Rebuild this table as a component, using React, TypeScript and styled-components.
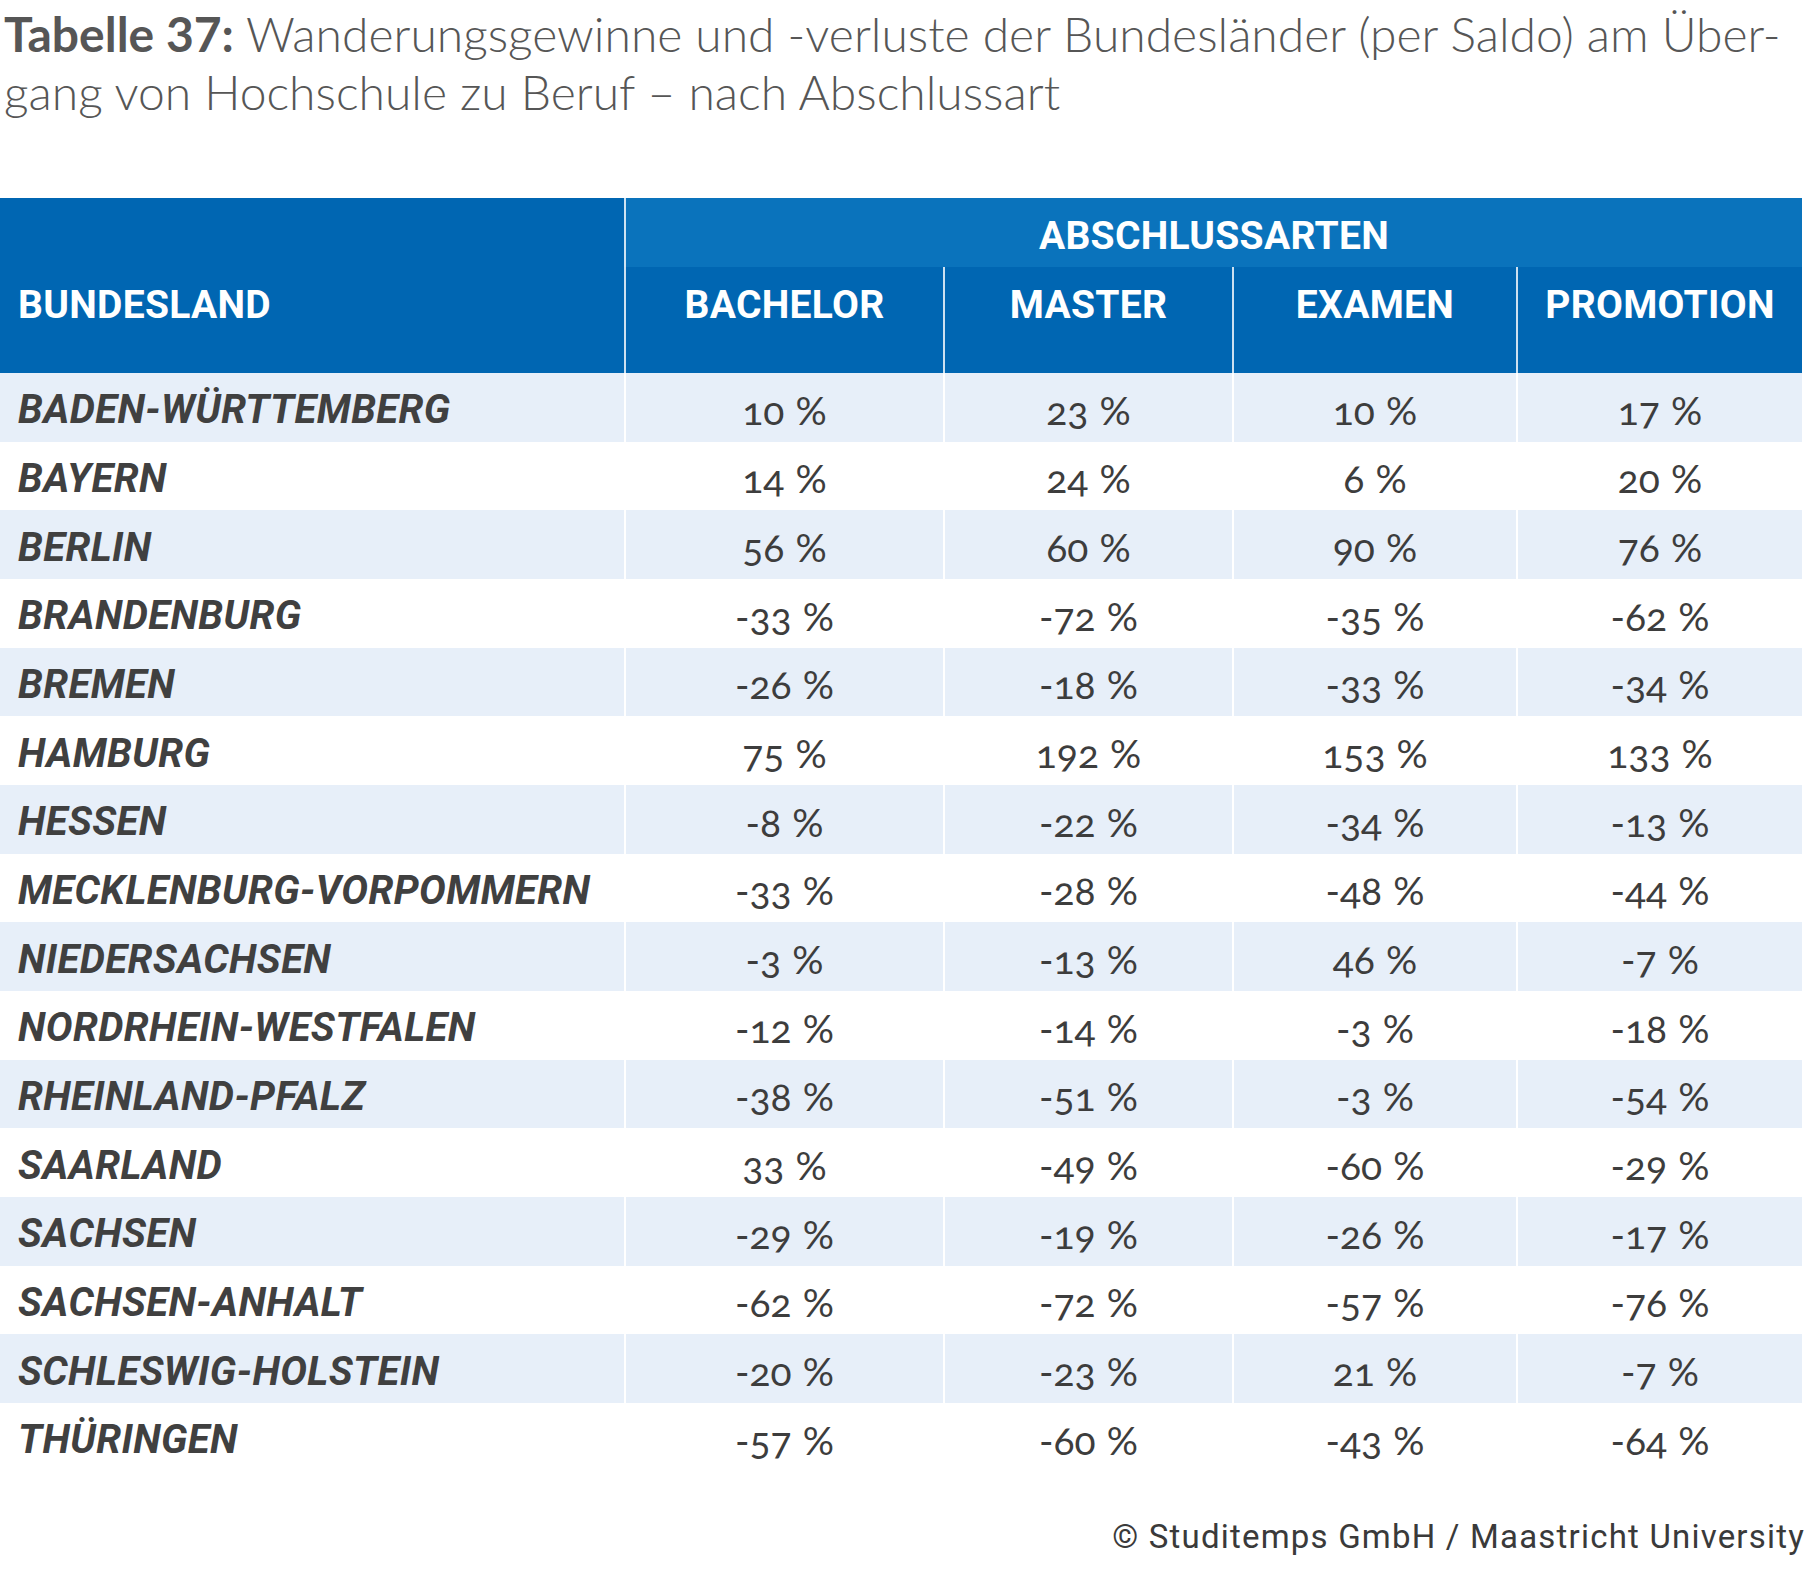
import React from "react"
import styled, { createGlobalStyle } from "styled-components"

const GlobalStyle = createGlobalStyle`
  html, body {
    margin: 0;
    padding: 0;
    background: #fff;
  }
`

const COLS = "624px 319px 289px 284px 286px"

const Page = styled.div`
  width: 1807px;
  min-height: 1594px;
  background: #fff;
`

const Title = styled.h1`
  margin: 0 0 77px;
  padding: 5px 0 0 4px;
  font-family: Lato, "Open Sans", sans-serif;
  font-weight: 300;
  font-size: 48px;
  line-height: 58px;
  color: #565656;
  white-space: nowrap;
`

const TitleLead = styled.span`
  font-weight: 700;
`

const Table = styled.div`
  width: 1802px;
  display: flex;
  flex-direction: column;
`

const Head = styled.div`
  display: grid;
  grid-template-columns: ${COLS};
  grid-template-rows: 69px 106px;
  font-family: Roboto, "Liberation Sans", sans-serif;
  font-weight: 700;
  font-size: 39px;
  line-height: 40px;
  letter-spacing: 0.3px;
  color: #fff;
`

const StateHead = styled.div`
  grid-row: 1 / span 2;
  background: #0066b2;
  padding: 87px 0 0 18px;
`

const GroupHead = styled.div`
  grid-column: 2 / span 4;
  background: #0a73bc;
  border-left: 2px solid rgba(255, 255, 255, 0.8);
  display: flex;
  align-items: center;
  justify-content: center;
  padding-top: 6px;
`

const SubHead = styled.div`
  background: #0066b2;
  border-left: 2px solid rgba(255, 255, 255, 0.8);
  display: flex;
  justify-content: center;
  padding-top: 18px;
`

const Row = styled.div<{ $shaded: boolean }>`
  display: grid;
  grid-template-columns: ${COLS};
  height: 68.67px;
  background: ${(p) => (p.$shaded ? "#e7eff9" : "#fff")};
`

const StateCell = styled.div`
  display: flex;
  align-items: center;
  padding: 5px 0 0 18px;
  font-family: Roboto, "Liberation Sans", sans-serif;
  font-weight: 700;
  font-style: italic;
  font-size: 40px;
  letter-spacing: 0.4px;
  color: #404040;
`

const ValueCell = styled.div`
  display: flex;
  align-items: center;
  justify-content: center;
  padding-top: 5px;
  border-left: 2px solid #fff;
  font-family: Lato, "Open Sans", sans-serif;
  font-weight: 400;
  font-size: 39px;
  font-variant-numeric: oldstyle-nums;
  word-spacing: 1px;
  color: #3d3d3d;
`

const Credit = styled.div`
  margin-top: 45px;
  padding-right: 2px;
  text-align: right;
  font-family: Roboto, "Liberation Sans", sans-serif;
  font-size: 33px;
  line-height: 40px;
  letter-spacing: 1.2px;
  color: #3a3a3a;
`

const degrees = ["BACHELOR", "MASTER", "EXAMEN", "PROMOTION"]

const rows: [string, number[]][] = [
  ["BADEN-WÜRTTEMBERG", [10, 23, 10, 17]],
  ["BAYERN", [14, 24, 6, 20]],
  ["BERLIN", [56, 60, 90, 76]],
  ["BRANDENBURG", [-33, -72, -35, -62]],
  ["BREMEN", [-26, -18, -33, -34]],
  ["HAMBURG", [75, 192, 153, 133]],
  ["HESSEN", [-8, -22, -34, -13]],
  ["MECKLENBURG-VORPOMMERN", [-33, -28, -48, -44]],
  ["NIEDERSACHSEN", [-3, -13, 46, -7]],
  ["NORDRHEIN-WESTFALEN", [-12, -14, -3, -18]],
  ["RHEINLAND-PFALZ", [-38, -51, -3, -54]],
  ["SAARLAND", [33, -49, -60, -29]],
  ["SACHSEN", [-29, -19, -26, -17]],
  ["SACHSEN-ANHALT", [-62, -72, -57, -76]],
  ["SCHLESWIG-HOLSTEIN", [-20, -23, 21, -7]],
  ["THÜRINGEN", [-57, -60, -43, -64]],
]

const App = () => {
  return (
    <Page>
      <GlobalStyle />
      <Title>
        <TitleLead>Tabelle 37:</TitleLead> Wanderungsgewinne und -verluste der
        Bundesländer (per Saldo) am Über-
        <br />
        gang von Hochschule zu Beruf – nach Abschlussart
      </Title>

      <Table>
        <Head>
          <StateHead>BUNDESLAND</StateHead>
          <GroupHead>ABSCHLUSSARTEN</GroupHead>
          {degrees.map((d) => (
            <SubHead key={d}>{d}</SubHead>
          ))}
        </Head>

        {rows.map(([name, values], i) => (
          <Row key={name} $shaded={i % 2 === 0}>
            <StateCell>{name}</StateCell>
            {values.map((v, j) => (
              <ValueCell key={j}>{v} %</ValueCell>
            ))}
          </Row>
        ))}
      </Table>

      <Credit>© Studitemps GmbH / Maastricht University</Credit>
    </Page>
  )
}

export default App
